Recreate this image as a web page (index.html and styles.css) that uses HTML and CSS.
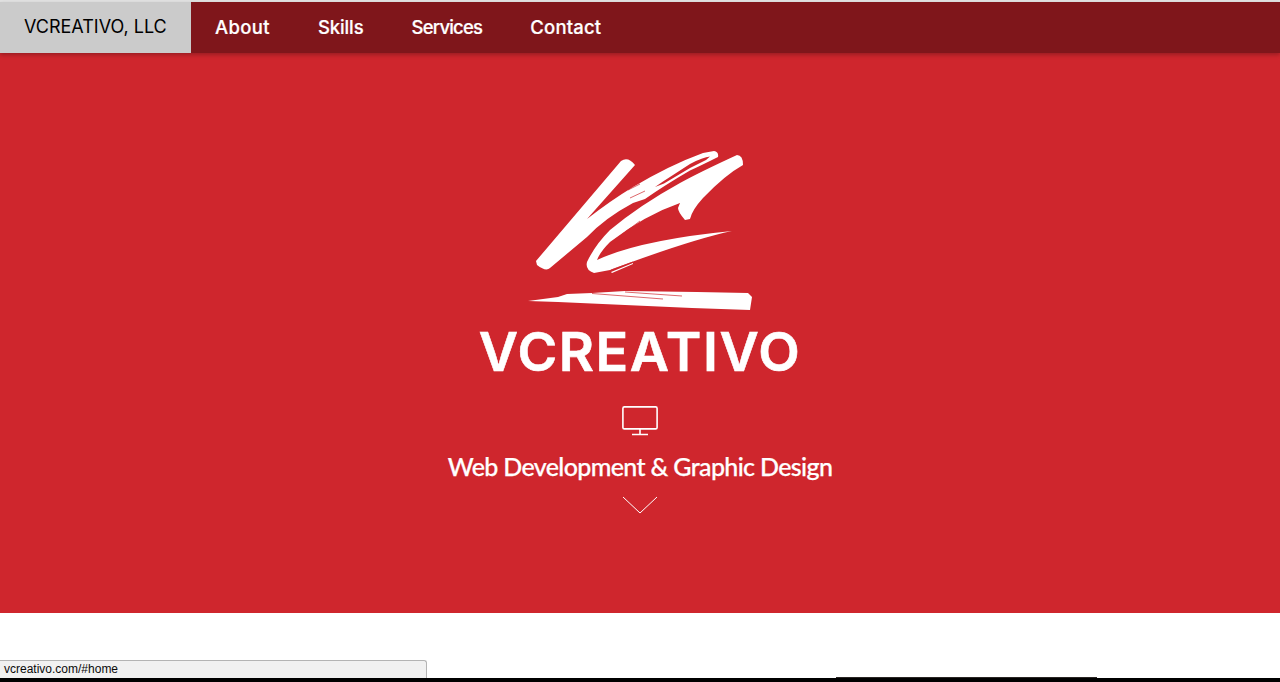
FILE: index.html
```html
<!DOCTYPE html>
<html lang="en">
<head>
<meta charset="utf-8">
<title>VCREATIVO, LLC</title>
<link rel="stylesheet" href="styles.css">
</head>
<body>
<div class="page">
  <div class="topline"></div>
  <nav class="nav">
    <a class="brand" href="#home">VCREATIVO, LLC</a>
    <a class="link link-about" href="#about">About</a>
    <a class="link link-skills" href="#skills">Skills</a>
    <a class="link link-services" href="#services">Services</a>
    <a class="link link-contact" href="#contact">Contact</a>
  </nav>
  <header class="hero">
    <svg class="mark" viewBox="500 140 280 180" aria-hidden="true">
      <path class="ink" d="M621 161Q628 156 635 165L587 219Q610 201 633 187Q670 165 703 153L714 151Q719 152 718 157Q700 166 690 170.5Q665 185 645 199L633 203Q605 218 587 237L550 268Q546 272 537 265L536 261Z"/>
      <path class="ink" d="M737 155Q743 155 743 165Q725 175 703 198Q692 210 690 219L685 220Q678 212 678 208L680 203Q645 215 610 242Q600 252 597 260Q640 240 732 231Q690 240 610 270L594 273Q585 270 587 262Q595 245 610 230Q640 205 680 183Q700 172 737 155Z"/>
      <path class="ink" d="M528 301L558 297L567 294L592 293L625 291L697 292L748 293L752 297L750 310L692 308L625 305L558 302Z"/>
      <path class="ink" d="M611 272L633 263L633 264L612 273Z"/>
      <path class="cut" d="M710 156.5Q703 157 690 164L663 181.5L655 187L664 183.5L690 168L706 160Z"/>
      <path class="hair" d="M600 256L612 242L640 221M603 254L622 237M611 270L633 262M630 198L645 191M628 190L640 184M592 293.5L663 299M625 292L682 296"/>
    </svg>
    <div class="wordmark">VCREATIVO</div>
    <svg class="monitor" viewBox="0 0 36 30" aria-hidden="true">
      <rect class="line" x="0.9" y="0.9" width="34.2" height="22" rx="1.5"/>
      <path class="line" d="M18 23V28M10 28.5H26"/>
    </svg>
    <h1 class="tagline">Web Development &amp; Graphic Design</h1>
    <svg class="chevron" viewBox="0 0 36 18" aria-hidden="true">
      <path class="thin" d="M1 1L18 17L35 1"/>
    </svg>
  </header>
  <main class="blank"></main>
  <div class="edge"><span class="edge-line"></span></div>
  <div class="status">vcreativo.com/#home</div>
</div>
</body>
</html>
```
FILE: styles.css
```css
html, body { margin: 0; padding: 0; height: 100%; background: #fff; }
.page { position: relative; display: flex; flex-direction: column; height: 682px; overflow: hidden; }
.topline { height: 2px; background: #e2e2e2; flex: none; }
.nav { position: relative; z-index: 1; display: flex; flex: none; height: 51px; background: #7f161b; box-shadow: 0 2px 4px rgba(0,0,0,.25); font: 500 18.5px/50px Inter, sans-serif; }
.nav a { text-decoration: none; display: block; }
.brand { width: 191px; box-sizing: border-box; padding-left: 24px; background: #cbcbcb; color: #000; font-weight: 400; font-size: 18px; white-space: nowrap; }
.link { color: #fff; padding: 0 24px; -webkit-text-stroke: .2px #fff; }
.link-about { letter-spacing: .35px; }
.link-skills { letter-spacing: -.1px; }
.link-services { letter-spacing: -.8px; }
.link-contact { letter-spacing: .2px; }
.hero { flex: none; height: 560px; box-sizing: border-box; padding-top: 87px; background: #cf262d; color: #fff; display: flex; flex-direction: column; align-items: center; }
.mark { width: 280px; height: 180px; flex: none; }
.ink { fill: #fff; }
.cut { fill: #cf262d; }
.hair { fill: none; stroke: #cf262d; stroke-width: .7; }
.line { fill: none; stroke: #fff; stroke-width: 1.6; }
.thin { fill: none; stroke: #fff; stroke-width: 1; }
.wordmark { font: 600 54px/54px Inter, sans-serif; margin-top: 5px; letter-spacing: 1.5px; -webkit-text-stroke: .6px #fff; white-space: nowrap; }
.monitor { width: 36px; height: 30px; margin-top: 27px; flex: none; }
.tagline { margin: 13px 0 0; font: 500 25px/34px Lato, sans-serif; letter-spacing: -.65px; -webkit-text-stroke: .25px #fff; white-space: nowrap; }
.chevron { width: 36px; height: 18px; margin-top: 13px; flex: none; }
.blank { flex: 1; background: #fff; }
.edge { flex: none; height: 4px; background: #000; position: relative; }
.edge-line { position: absolute; left: 836px; top: -1px; width: 261px; height: 1px; background: #2a2624; }
.status { position: absolute; left: 0; top: 660px; width: 427px; height: 18px; box-sizing: border-box; background: #f1f1f1; border: 1px solid #b4b4b4; border-left: 0; border-bottom: 0; border-radius: 0 3px 0 0; padding-left: 4px; font: 12px/17px "Liberation Sans", sans-serif; color: #0a0a0a; }
```
